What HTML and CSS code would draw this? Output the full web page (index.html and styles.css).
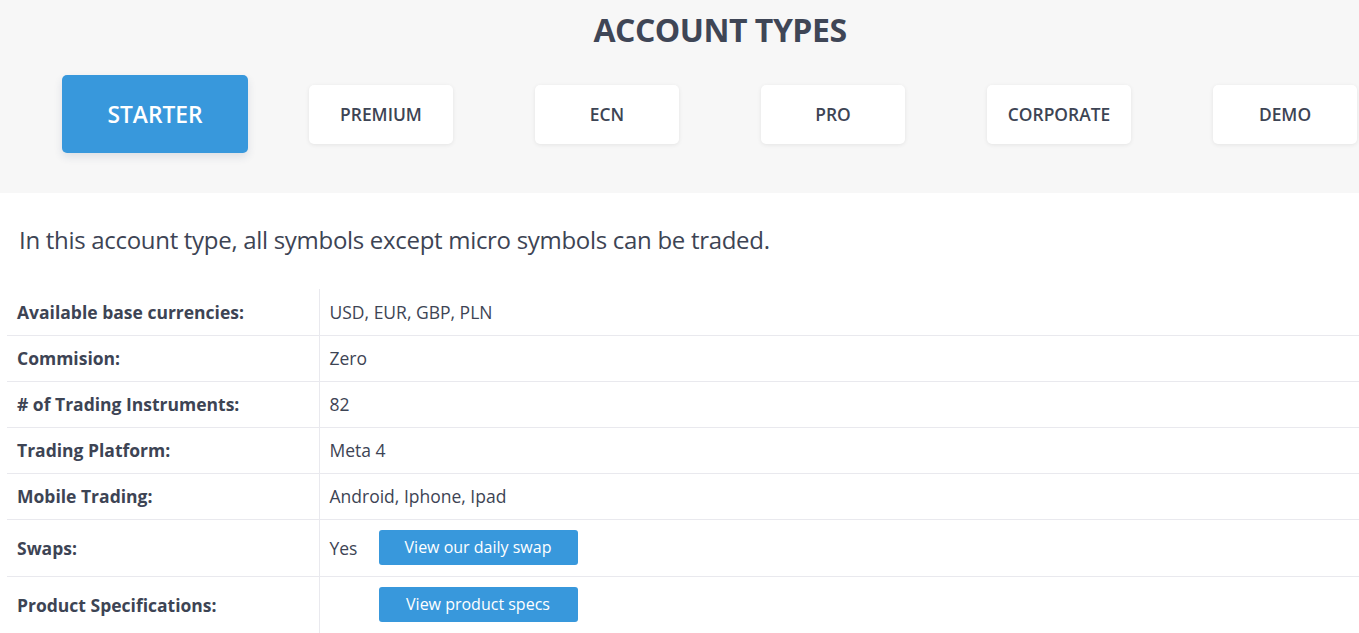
FILE: index.html
```html
<!DOCTYPE html>
<html lang="en">

<head>
  <meta charset="UTF-8" />
  <meta name="viewport" content="width=device-width, initial-scale=1" />
  <title>Account Types</title>
  <link rel="stylesheet" href="styles.css">
</head>

<body>
  <section class="hero">
    <h1>ACCOUNT TYPES</h1>
    <nav class="tabs">
      <a class="tab active" href="#">STARTER</a>
      <a class="tab" href="#">PREMIUM</a>
      <a class="tab" href="#">ECN</a>
      <a class="tab" href="#">PRO</a>
      <a class="tab" href="#">CORPORATE</a>
      <a class="tab" href="#">DEMO</a>
    </nav>
  </section>

  <p class="intro">In this account type, all symbols except micro symbols can be traded.</p>

  <table class="specs">
    <tr>
      <td class="label">Available base currencies:</td>
      <td>USD, EUR, GBP, PLN</td>
    </tr>
    <tr>
      <td class="label">Commision:</td>
      <td>Zero</td>
    </tr>
    <tr>
      <td class="label"># of Trading Instruments:</td>
      <td>82</td>
    </tr>
    <tr>
      <td class="label">Trading Platform:</td>
      <td>Meta 4</td>
    </tr>
    <tr>
      <td class="label">Mobile Trading:</td>
      <td>Android, Iphone, Ipad</td>
    </tr>
    <tr class="tall">
      <td class="label">Swaps:</td>
      <td><span class="lead">Yes</span><a class="btn" href="#">View our daily swap</a></td>
    </tr>
    <tr class="tall">
      <td class="label">Product Specifications:</td>
      <td><span class="lead"></span><a class="btn" href="#">View product specs</a></td>
    </tr>
  </table>
</body>

</html>
```

FILE: styles.css
```css
* {
  box-sizing: border-box;
  margin: 0;
  padding: 0;
}

body {
  background: #fff;
  color: #3d4454;
  font-family: 'Open Sans', 'Liberation Sans', sans-serif;
  overflow: hidden;
}

.hero {
  background: #f7f7f7;
  padding: 10px 0 40px;
}

/* page is wider than the window, title sits on its centre */
h1 {
  text-align: center;
  padding-left: 81px;
  font-size: 32px;
  line-height: 40px;
  font-weight: 700;
  letter-spacing: -0.5px;
  color: #3f4656;
}

.tabs {
  display: flex;
  align-items: center;
  gap: 82px;
  height: 78px;
  margin-top: 25px;
  padding-left: 83px;
}

.tab {
  display: flex;
  align-items: center;
  justify-content: center;
  flex: 0 0 144px;
  height: 59px;
  background: #fff;
  border-radius: 5px;
  box-shadow: 0 1px 4px rgba(0, 0, 0, 0.08);
  color: #3d4454;
  text-decoration: none;
  font-weight: 600;
  font-size: 17.4px;
}

.tab.active {
  flex-basis: 186px;
  height: 78px;
  margin: 0 -21px;
  background: #3898dc;
  color: #fff;
  font-size: 22.8px;
  box-shadow: 0 4px 8px rgba(40, 60, 100, 0.12);
}

.intro {
  margin: 30px 0 32px 19px;
  font-size: 24px;
  line-height: 34px;
  letter-spacing: -0.3px;
}

.specs {
  margin-left: 7px;
  width: calc(100% - 7px);
  border-collapse: collapse;
  font-size: 17.5px;
}

.specs td {
  height: 46px;
  padding: 0 10px;
  border-bottom: 1px solid #e9e9ee;
  vertical-align: middle;
}

.specs tr.tall td {
  height: 57px;
}

.specs td.label {
  width: 312px;
  font-weight: 700;
  border-right: 1px solid #e9e9ee;
}

.lead {
  display: inline-block;
  width: 49px;
  vertical-align: middle;
}

.btn {
  display: inline-block;
  width: 199px;
  height: 35px;
  line-height: 34px;
  text-align: center;
  background: #3898dc;
  color: #fff;
  border-radius: 3px;
  text-decoration: none;
  font-size: 16px;
  vertical-align: middle;
}
```
